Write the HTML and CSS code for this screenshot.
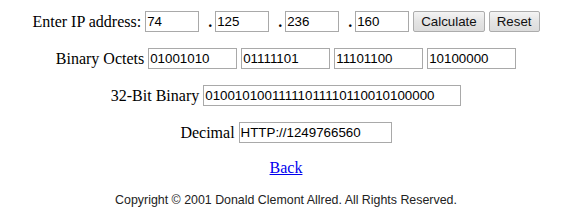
FILE: index.html
```html
<!DOCTYPE html>
<html>
<head>
  <meta charset="utf-8">
  <link rel="stylesheet" href="styles.css">
  <title>IP Address Converter</title>
</head>
<body>
  <div class="page">
    <div class="row">
      <span class="label">Enter IP address:</span>
      <input type="text" class="octet" value="74">
      <b class="dot">.</b>
      <input type="text" class="octet" value="125">
      <b class="dot">.</b>
      <input type="text" class="octet" value="236">
      <b class="dot">.</b>
      <input type="text" class="octet" value="160">
      <button class="btn">Calculate</button>
      <button class="btn">Reset</button>
    </div>
    <div class="row">
      <span class="label">Binary Octets</span>
      <input type="text" class="binOctet" value="01001010">
      <input type="text" class="binOctet" value="01111101">
      <input type="text" class="binOctet" value="11101100">
      <input type="text" class="binOctet" value="10100000">
    </div>
    <div class="row">
      <span class="label">32-Bit Binary</span>
      <input type="text" class="bin32" value="01001010011111011110110010100000">
    </div>
    <div class="row">
      <span class="label">Decimal</span>
      <input type="text" class="decimal" value="HTTP://1249766560">
    </div>
    <p class="back"><a href="#">Back</a></p>
    <p class="copy">Copyright &copy; 2001 Donald Clemont Allred. All Rights Reserved.</p>
  </div>
</body>
</html>
```

FILE: styles.css
```css
body {
  margin: 0;
  background-color: #fff;
  font-family: "Liberation Serif", "Times New Roman", serif;
  font-size: 16px;
  color: #000;
}
.page {
  width: 572px;
  padding-top: 11px;
  display: flex;
  flex-direction: column;
  align-items: center;
  gap: 16px;
}
.row {
  display: flex;
  align-items: center;
  gap: 4px;
  height: 21px;
}
.label {
  line-height: 18px;
}
input {
  box-sizing: border-box;
  height: 21px;
  margin: 0;
  padding: 0 1px;
  border: 1px solid #a9a9a9;
  font-family: "Liberation Sans", Arial, sans-serif;
  font-size: 13.33px;
  color: #000;
  outline: none;
}
.octet {
  width: 54px;
}
.dot {
  margin-left: 5px;
  width: 3px;
  line-height: 18px;
}
.binOctet {
  width: 89px;
}
.bin32 {
  width: 258px;
}
.decimal {
  width: 153px;
}
.btn {
  box-sizing: border-box;
  height: 21px;
  margin: 0;
  padding: 0 7px;
  border: 1px solid #acacac;
  border-radius: 2px;
  background: linear-gradient(#f4f4f4, #e4e4e4 50%, #dcdcdc);
  font-family: "Liberation Sans", Arial, sans-serif;
  font-size: 13.33px;
  color: #111;
}
.back {
  margin: 0;
  line-height: 18px;
}
.back a {
  color: #0000ee;
}
.copy {
  margin: 0;
  font-family: "Liberation Sans", Arial, sans-serif;
  font-size: 12.4px;
  line-height: 14px;
  color: #222;
}
```
